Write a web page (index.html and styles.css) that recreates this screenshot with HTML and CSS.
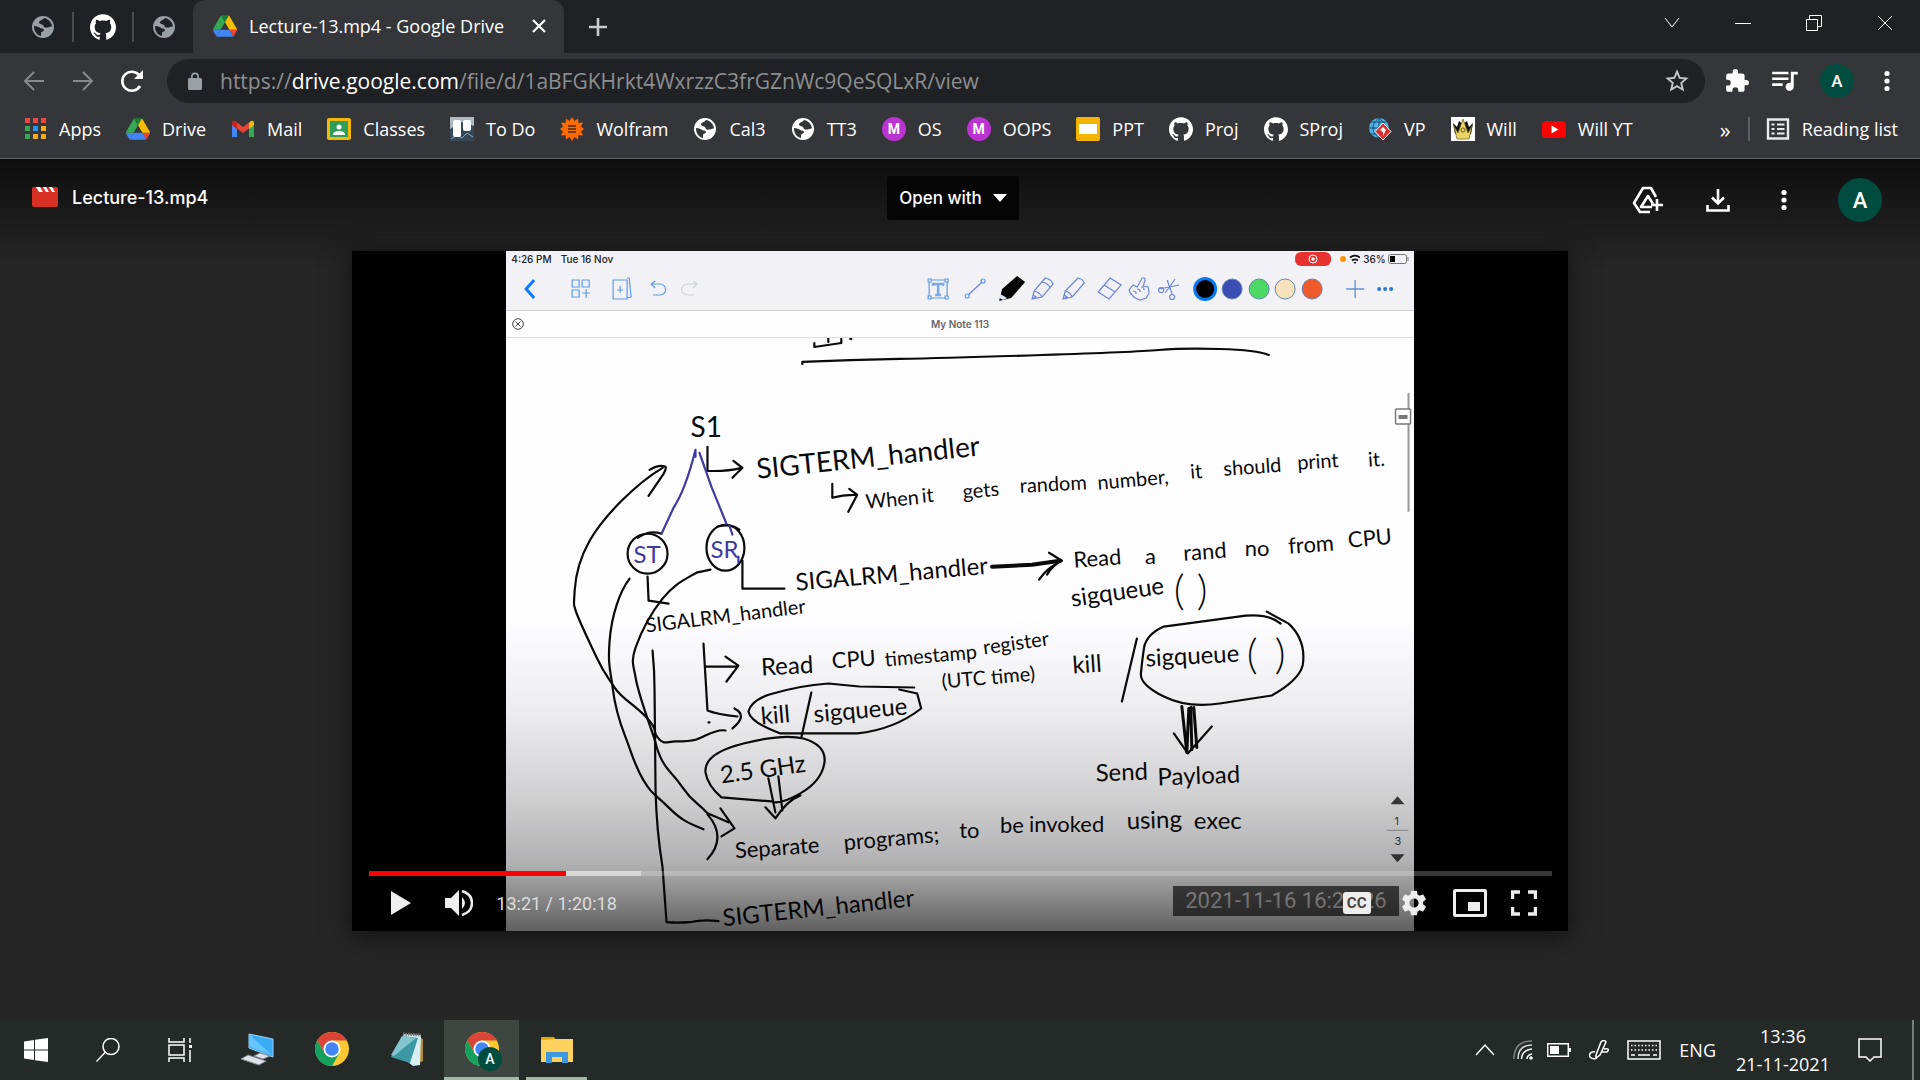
FILE: index.html
```html
<!DOCTYPE html>
<html lang="en">
<head>
<meta charset="utf-8">
<title>Lecture-13.mp4 - Google Drive</title>
<link rel="stylesheet" href="styles.css">
</head>
<body>
<svg class="defs" aria-hidden="true">
  <symbol id="globe" viewBox="0 0 24 24"><path fill-rule="evenodd" d="M12 1a11 11 0 1 0 0 22 11 11 0 0 0 0-22zM3 11c3 .3 5 1.200 7 2.500 2 0 3 .5 3 2-1 1.500-3 1-3 3v2.500C5.500 20 2.800 16 3 11zM13 3c-1 2-4 2-5 4-.5 2 3 2 4 3 .5 2 2 3 4 2.500 2 0 3-1.500 5-1C20.500 7 17 3.500 13 3z"/></symbol>
  <symbol id="github" viewBox="0 0 24 24"><path d="M12 .297c-6.63 0-12 5.373-12 12 0 5.303 3.438 9.8 8.205 11.385.6.113.82-.258.82-.577 0-.285-.01-1.04-.015-2.04-3.338.724-4.042-1.61-4.042-1.61C4.422 18.07 3.633 17.7 3.633 17.7c-1.087-.744.084-.729.084-.729 1.205.084 1.838 1.236 1.838 1.236 1.07 1.835 2.809 1.305 3.495.998.108-.776.417-1.305.76-1.605-2.665-.3-5.466-1.332-5.466-5.93 0-1.31.465-2.38 1.235-3.22-.135-.303-.54-1.523.105-3.176 0 0 1.005-.322 3.3 1.23.96-.267 1.98-.399 3-.405 1.02.006 2.04.138 3 .405 2.28-1.552 3.285-1.23 3.285-1.23.645 1.653.24 2.873.12 3.176.765.84 1.23 1.91 1.23 3.22 0 4.61-2.805 5.625-5.475 5.92.42.36.81 1.096.81 2.22 0 1.606-.015 2.896-.015 3.286 0 .315.21.69.825.57C20.565 22.092 24 17.592 24 12.297c0-6.627-5.373-12-12-12"/></symbol>
  <symbol id="drive" viewBox="0 0 87.3 78"><path fill="#4285f4" d="m6.600 66.850 3.850 6.650c.8 1.400 1.950 2.500 3.300 3.300l13.750-23.800h-27.500c0 1.550.4 3.100 1.200 4.500z"/><path fill="#34a853" d="m43.650 25-13.750-23.800c-1.350.8-2.500 1.900-3.300 3.300l-25.400 44a9.060 9.060 0 0 0-1.200 4.500h27.500z"/><path fill="#ea4335" d="m73.550 76.800c1.350-.8 2.500-1.900 3.300-3.300l1.600-2.750 7.650-13.250c.8-1.400 1.200-2.950 1.200-4.500h-27.502l5.852 11.500z"/><path fill="#188038" d="m43.650 25 13.750-23.800c-1.350-.8-2.900-1.200-4.500-1.200h-18.500c-1.600 0-3.150.45-4.500 1.200z"/><path fill="#4285f4" d="m59.800 53h-32.300l-13.750 23.800c1.350.8 2.900 1.200 4.500 1.200h50.800c1.600 0 3.150-.45 4.500-1.200z"/><path fill="#fbbc04" d="m73.400 26.500-12.700-22c-.8-1.400-1.950-2.500-3.300-3.300l-13.750 23.800 16.150 28h27.450c0-1.550-.4-3.100-1.200-4.500z"/></symbol>
  <symbol id="chrome" viewBox="0 0 48 48"><circle cx="24" cy="24" r="24" fill="#fbc92f"/><path fill="#db4437" d="M3.200 12A24 24 0 0 1 44.800 12H24L13.600 30z"/><path fill="#16a05d" d="M3.200 12A24 24 0 0 0 24 48L34.400 30 13.600 30z"/><circle cx="24" cy="24" r="12" fill="#fff"/><circle cx="24" cy="24" r="9.500" fill="#4285f4"/></symbol>
  <symbol id="kebab" viewBox="0 0 24 24"><circle cx="12" cy="4.500" r="2.600"/><circle cx="12" cy="12" r="2.600"/><circle cx="12" cy="19.500" r="2.600"/></symbol>
</svg>

<header class="browser">
  <div class="tabstrip">
    <button class="pin" aria-label="Pinned site"><svg class="i24 grey"><use href="#globe"/></svg></button>
    <button class="pin" aria-label="Pinned GitHub"><svg class="i26 white"><use href="#github"/></svg></button>
    <button class="pin last" aria-label="Pinned site"><svg class="i24 grey"><use href="#globe"/></svg></button>
    <div class="tab">
      <svg class="i24"><use href="#drive"/></svg>
      <span class="tab-title">Lecture-13.mp4 - Google Drive</span>
      <button aria-label="Close tab"><svg class="i14" viewBox="0 0 14 14"><path d="M1 1l12 12M13 1L1 13" stroke="#fff" stroke-width="2.200"/></svg></button>
    </div>
    <button class="newtab" aria-label="New tab"><svg class="i20" viewBox="0 0 20 20"><path d="M10 1v18M1 10h18" stroke="#c8cacd" stroke-width="2.600"/></svg></button>
    <div class="window-controls">
      <button aria-label="Search tabs"><svg class="i16" viewBox="0 0 16 16"><path d="M1 3l7 9 7-9" class="thin"/></svg></button>
      <button aria-label="Minimize"><svg class="i16" viewBox="0 0 16 16"><path d="M0 8.500h16" class="thin"/></svg></button>
      <button aria-label="Restore"><svg class="i16" viewBox="0 0 16 16"><path d="M.5 4.500h11v11H.5zM3.500 4V.5h12v11H12" class="thin"/></svg></button>
      <button aria-label="Close"><svg class="i16" viewBox="0 0 16 16"><path d="M1 1l14 14M15 1L1 15" class="thin"/></svg></button>
    </div>
  </div>

  <div class="toolbar">
    <button aria-label="Back"><svg class="i24" viewBox="0 0 24 24"><path d="M22 12H3M12 3l-9 9 9 9" class="dim"/></svg></button>
    <button aria-label="Forward"><svg class="i24" viewBox="0 0 24 24"><path d="M2 12h19M12 3l9 9-9 9" class="dim"/></svg></button>
    <button aria-label="Reload"><svg class="i24" viewBox="0 0 24 24"><path d="M20 17a9.500 9.500 0 1 1-.6-10.500" fill="none" stroke="#fff" stroke-width="2.600"/><path d="M23 1v9h-9z" fill="#fff"/></svg></button>
    <div class="omnibox">
      <svg class="lock" viewBox="0 0 14 18"><path fill="#9aa0a6" fill-rule="evenodd" d="M1.500 6H3V4.500a4 4 0 0 1 8 0V6h1.500q1.500 0 1.500 1.500v9q0 1.500-1.500 1.500h-11Q0 18 0 16.500v-9Q0 6 1.500 6zM4.700 6h4.600V4.500a2.300 2.300 0 0 0-4.600 0z"/></svg>
      <a class="url" href="#">https://<b>drive.google.com</b>/file/d/1aBFGKHrkt4WxrzzC3frGZnWc9QeSQLxR/view</a>
      <button aria-label="Bookmark this tab"><svg class="i28" viewBox="0 0 24 24"><path fill="#c4c7ca" d="M22 9.240l-7.190-.62L12 2 9.190 8.630 2 9.240l5.460 4.730L5.820 21 12 17.270 18.180 21l-1.630-7.030L22 9.240zM12 15.400l-3.760 2.270 1-4.280-3.320-2.880 4.380-.38L12 6.100l1.710 4.040 4.380.38-3.320 2.880 1 4.280L12 15.400z"/></svg></button>
    </div>
    <div class="ext">
      <button aria-label="Extensions"><svg class="i26 white" viewBox="0 0 24 24"><path d="M20.500 11H19V7c0-1.100-.9-2-2-2h-4V3.500a2.500 2.500 0 0 0-5 0V5H4c-1.100 0-2 .9-2 2v3.800h1.500a2.700 2.700 0 0 1 0 5.400H2V20c0 1.100.9 2 2 2h3.800v-1.500a2.700 2.700 0 0 1 5.400 0V22H17c1.100 0 2-.9 2-2v-4h1.500a2.500 2.500 0 0 0 0-5z"/></svg></button>
      <button aria-label="Media"><svg class="i28 white" viewBox="0 0 24 24"><path d="M1 4h14v2.200H1zM1 9h14v2.200H1zM1 14h9v2.200H1zM17 4h6v2.500h-3.500V17a3.500 3.500 0 1 1-2.500-3.400z"/></svg></button>
      <button class="avatar small" aria-label="Profile">A</button>
      <button aria-label="Menu"><svg class="i24 white"><use href="#kebab"/></svg></button>
    </div>
  </div>

  <nav class="bookmarks">
    <a href="#"><svg class="i24" viewBox="0 0 24 24"><path fill="#f0443a" d="M2 1h5v5H2zM10 1h5v5h-5zM18 1h5v5h-5z"/><path fill="#34a853" d="M2 9h5v5H2zM2 17h5v5H2z"/><path fill="#2196f3" d="M10 9h5v5h-5z"/><path fill="#fba90a" d="M18 9h5v5h-5zM10 17h5v5h-5zM18 17h5v5h-5z"/></svg>Apps</a>
    <a href="#"><svg class="i24"><use href="#drive"/></svg>Drive</a>
    <a href="#"><svg class="i24" viewBox="0 0 24 24"><path fill="#4285f4" d="M1 6v14h5V10z"/><path fill="#34a853" d="M23 6v14h-5V10z"/><path fill="#ea4335" d="M4 4l8 6 8-6 1 5-9 7-9-7z"/><path fill="#c5221f" d="M1 6q0-3 3-2l2 2v6L1 8z"/><path fill="#fbbc04" d="M23 6q0-3-3-2l-2 2v6l5-4z"/></svg>Mail</a>
    <a href="#"><svg class="i24" viewBox="0 0 24 24"><rect y="1" width="24" height="22" rx="2" fill="#f4b70c"/><rect x="3" y="4" width="18" height="16" fill="#2f9e58"/><circle cx="12" cy="10" r="2.500" fill="#fff"/><path d="M6 18q0-4 6-4t6 4z" fill="#fff"/></svg>Classes</a>
    <a href="#"><svg class="i24" viewBox="0 0 24 24"><path d="M0 0h24v24H0z" fill="#35485a"/><path d="M0 0h24v9L12 5 0 12z" fill="#aeb8bf"/><path d="M1 22l6-4 5 3 5-5 6 4" stroke="#8aa2b4" fill="none"/><rect x="3" y="3" width="8" height="17" rx="2" fill="#fff"/><rect x="13" y="3" width="8" height="11" rx="2" fill="#fff"/></svg>To Do</a>
    <a href="#"><svg class="i24" viewBox="0 0 24 24"><path fill="#ff6a00" d="M12 0l2.500 4L18 1.500l.5 4.500 4.500-.5-2 4 3 2.500-3 2.500 2 4-4.500-.5-.5 4.500-3.500-2.500L12 24l-2.500-4L6 22.500 5.500 18 1 18.500l2-4L0 12l3-2.500-2-4L5.500 6 6 1.500 9.500 4z"/><path d="M8 9h8M8 12h8M8 15h8" stroke="#4c2b15" stroke-width="1.500"/></svg>Wolfram</a>
    <a href="#"><svg class="i24 white"><use href="#globe"/></svg>Cal3</a>
    <a href="#"><svg class="i24 white"><use href="#globe"/></svg>TT3</a>
    <a href="#"><span class="m">M</span>OS</a>
    <a href="#"><span class="m">M</span>OOPS</a>
    <a href="#"><svg class="i24" viewBox="0 0 24 24"><rect width="24" height="24" rx="2" fill="#f5b400"/><path fill="#fff" d="M3 7h18v10H3z"/></svg>PPT</a>
    <a href="#"><svg class="i24 white"><use href="#github"/></svg>Proj</a>
    <a href="#"><svg class="i24 white"><use href="#github"/></svg>SProj</a>
    <a href="#"><svg class="i24" viewBox="0 0 24 24"><circle cx="11" cy="11" r="10" fill="#4fb3e8"/><path d="M11 1v20M1 11h20M3 5h16M3 17h16M11 1C3 7 3 15 11 21M11 1c8 6 8 14 0 20" stroke="#174b70" fill="none"/><path d="M15 6l8 8.500-8 8.500-8-8.500z" fill="#d9302c" stroke="#fff"/><path d="M15 10l3 3-3 6v-4l-3-2z" fill="#fff"/></svg>VP</a>
    <a href="#"><svg class="i24" viewBox="0 0 24 24"><path d="M0 0h24v24H0z" fill="#fff"/><path d="M2 6l4 4 2-6 4 3 4-3 2 6 4-4-2 11H4z" fill="#111"/><path d="M3 9l4 7 5-14 5 14 4-7-3 13H6z" fill="#ecd467" stroke="#6a5a18" stroke-width=".7"/><circle cx="12" cy="13" r="2" fill="none" stroke="#6a5a18"/></svg>Will</a>
    <a href="#"><svg class="i24" viewBox="0 0 24 24"><rect y="4" width="24" height="17" rx="4" fill="#f00"/><path d="M9.500 8.500l7 4-7 4z" fill="#fff"/></svg>Will YT</a>
    <button class="more" aria-label="More bookmarks">»</button>
    <a class="reading" href="#"><svg class="i24" viewBox="0 0 24 24"><path fill="none" stroke="#e8eaed" stroke-width="2.400" d="M2 2.500h20v19H2z"/><path d="M5.500 7.500h3M11 7.500h7.500M5.500 12h3M11 12h7.500M5.500 16.500h3M11 16.500h7.500" stroke="#e8eaed" stroke-width="2.200"/></svg>Reading list</a>
  </nav>
</header>

<main class="viewer">
  <div class="viewer-bar">
    <h1><svg class="i26" viewBox="0 0 26 22"><rect y="1" width="26" height="20" rx="2" fill="#d93025"/><path fill="#fff" d="M4 1h4l3 5H7zM11 1h3l3 5h-3zM17 1h3l3 5h-3z"/></svg>Lecture-13.mp4</h1>
    <button class="open-with">Open with <svg class="caret" viewBox="0 0 14 8"><path d="M0 0h14L7 8z" fill="#fff"/></svg></button>
    <div class="actions">
      <button aria-label="Add shortcut to Drive"><svg class="i32" viewBox="0 0 32 32"><path d="M18 28H8L2 19 11 4h8l5 9M20 23H9l7-11 5 8" fill="none" stroke="#fff" stroke-width="2.600" stroke-linejoin="round"/><path d="M25 15v12M19 21h12" stroke="#fff" stroke-width="2.600"/></svg></button>
      <button aria-label="Download"><svg class="i24" viewBox="0 0 24 24"><path d="M12 1v14M6 9.500l6 6 6-6M1.500 17v5.500h21V17" fill="none" stroke="#fff" stroke-width="2.600"/></svg></button>
      <button aria-label="More actions"><svg class="i24 white"><use href="#kebab"/></svg></button>
      <button class="avatar" aria-label="Account">A</button>
    </div>
  </div>

  <section class="player">
    <div class="note">
      <div class="status">
        <span>4:26 PM</span><span>Tue 16 Nov</span>
        <svg class="rec" viewBox="0 0 36 14"><rect width="36" height="14" rx="6" fill="#e8322f"/><circle cx="18" cy="7" r="4" fill="none" stroke="#fff"/><circle cx="18" cy="7" r="1.800" fill="#fff"/></svg>
        <svg class="signal" viewBox="0 0 20 12"><circle cx="3" cy="6" r="3" fill="#ff9500"/><path d="M10 4.500a8 8 0 0 1 10 0M12 7.500a5 5 0 0 1 6 0" fill="none" stroke="#111" stroke-width="1.800"/><path d="M13.500 9h3L15 11z"/></svg>
        <span>36%</span>
        <svg class="batt" viewBox="0 0 21 10"><rect x=".5" y=".5" width="18" height="9" rx="2" fill="none" stroke="#777"/><path d="M2 2h5v6H2z"/><path d="M20 3v4" stroke="#777"/></svg>
      </div>
      <svg class="tools" viewBox="507 267 907 43">
        <path d="M535 280l-8 9 8 9" stroke="#0a7aff" stroke-width="3" fill="none"/>
        <g fill="none" stroke="#5b9be8" stroke-width="1.200">
          <path d="M573 280h7v7h-7zM583 280h7v7h-7zM573 290h7v7h-7zM583 293h8M587 289v9M614 280h14v19h-14zM628 278h2l2 19-4 1M618 290h6M621 286v7"/>
          <path d="M656 281l-4 3 4 4M652 284h9a5 5 0 0 1 0 11h-7"/>
          <path stroke="#cfd3da" d="M694 281l4 3-4 4M697 284h-9a5 5 0 0 0 0 11h7"/>
          <path d="M930 280h18v18h-18z"/><path stroke-width="2.500" stroke="#79a9e6" d="M934 286v-2h10v2M939 284v11M936 295h6"/>
          <path fill="#fff" d="M929 279h3v3h-3zM946 279h3v3h-3zM929 296h3v3h-3zM946 296h3v3h-3z"/>
          <path stroke="#6b83d8" d="M969 295l14-13"/><circle cx="968" cy="296" r="2"/><circle cx="984" cy="281" r="2"/>
          <g stroke="#6c86d8"><path d="M1033 299l2-8 11-13q6 1 8 6l-11 13zM1035 291q5 1 8 6M1043 282q6 1 8 6M1033 299l4-2-3-2"/><path d="M1064 299l2-8 13-13q5 1 6 5l-12 14zM1066 291q5 1 7 6M1064 299l4-2-3-2"/><path d="M1099 292l12-14 11 7-12 14zM1105 285l11 7"/><path d="M1136 298q-5-4-6-8l4-5 4 2 5-9q3-1 3 2l-2 6 5 1 1 6-3 5-6 2zM1134 291q3 0 3 3M1138 289q3 0 3 3M1142 287q3 0 3 3"/><path d="M1176 279l-10 14M1180 285l-20 4M1168 280l5 14"/><circle cx="1162" cy="290" r="2.500"/><circle cx="1173" cy="297" r="2.500"/></g>
        </g>
        <path d="M1000 301l3-12 15-13 8 6-14 16z" fill="#050505"/><path d="M1001 294l7 4-4 2-4-2z" fill="#dfe8f7"/>
        <circle cx="1206" cy="289" r="12" fill="#0b78f0"/><circle cx="1206" cy="289" r="9"/>
        <g stroke="#6688b0"><circle cx="1233" cy="289" r="10" fill="#3b4cb4"/><circle cx="1260" cy="289" r="10" fill="#4cd964"/><circle cx="1286" cy="289" r="10" fill="#f8e2bd"/><circle cx="1313" cy="289" r="10" fill="#f05a2a"/></g>
        <path d="M1347 289h18M1356 280v18" stroke="#5f90d6" stroke-width="1.300"/>
        <g fill="#2b78dc"><circle cx="1380" cy="289" r="2"/><circle cx="1386" cy="289" r="2"/><circle cx="1392" cy="289" r="2"/></g>
      </svg>
      <div class="note-title">
        <svg class="i12" viewBox="0 0 12 12"><circle cx="6" cy="6" r="5.300" fill="none" stroke="#444"/><path d="M3.500 3.500l5 5M8.500 3.500l-5 5" stroke="#444"/></svg>
        <span>My Note 113</span>
      </div>
      <svg class="canvas" viewBox="507 337 907 594">
        <g class="ink">
          <path d="M815 342v4l27-4v-4M829 337v4M851 338h1M803 363v-2Q850 359 900 358T1043 354 1160 349 1221 348 1270 354"/>
          <path d="M708 446v24q18 1 34-3M734 460l9 7-10 10M833 483v14q10-3 23-3M850 488l8 6-9 17"/>
          <path d="M743 560v28h42M648 576l1 24 20 3"/>
          <path stroke-width="4" d="M993 566l40-2 28-4"/><path d="M1050 552l13 8q-14 6-23 19M1063 560q-9 4-15 14"/>
          <ellipse cx="648" cy="553" rx="20" ry="20"/><ellipse cx="726" cy="547" rx="19" ry="23"/><path d="M638 537q12-8 24-4M718 526q12-4 22 3"/>
          <path d="M663 467C648 476 635 487 622 500S598 526 590 540 576 573 575 590 574 603 576 610 589 640 597 657 607 675 615 687 634 703 647 717 652 729 658 737 667 741 676 741 690 741 697 739 716 728 726 730M650 469q10-6 16-3 1 2-2 7l-15 22"/>
          <path d="M630 578C620 591 612 615 610 640S611 670 613 687 619 719 626 737 635 765 644 780 655 793 669 807 690 823 704 829"/>
          <path d="M711 569l-14 3C685 579 675 583 663 598S641 633 636 647 634 665 636 677 645 710 652 730 655 743 661 757 673 772 683 787 697 801 708 813L729 822M721 808l14 20-13 8M708 814Q728 837 708 859"/>
          <path d="M653 650q2 20 2 40l1 100q1 40 7 77l4 55q10 1 23 0 14-3 29-1"/>
          <path d="M704 643l4 67q10 4 30 6M735 708q14 7-2 20M706 666h31M726 656l13 9-12 16M709 722h1"/>
          <path d="M812 692l-10 45M915 687L860 686 829 683Q800 685 770 694 752 700 749 711 751 722 781 733L858 733Q895 729 922 708L918 693 900 689"/>
          <path d="M706 772Q704 753 744 743T804 738Q828 745 825 763T801 793 772 801L722 797Q708 785 706 772zM769 778l7 34M779 776l4 34M766 807l10 11Q788 800 801 795"/>
          <path d="M1138 638l-15 63M1282 623Q1270 613 1247 615L1165 626Q1147 634 1145 648T1142 673 1165 696 1221 703 1273 695Q1300 680 1304 665 1308 640 1290 623L1268 611"/>
          <path stroke-width="3" d="M1183 706l5 46 2-44M1195 707l3 40M1192 707l1 42"/><path d="M1175 733l14 20 24-27"/>
        </g>
        <g class="ink blue"><path d="M696 449q-10 40-22 58l-12 26M700 452l12 34 15 37M696 449v7M730 525l3 9M739 556v6"/></g>
        <g class="hand">
          <text class="xl" x="691" y="436">S1</text>
          <text class="xl" transform="translate(758 478) rotate(-6)">SIGTERM_handler</text>
          <g class="s">
            <text transform="translate(867 508) rotate(-5)">When</text><text transform="translate(923 502) rotate(-5)">it</text><text transform="translate(964 498) rotate(-5)">gets</text><text transform="translate(1021 492) rotate(-3)">random</text><text transform="translate(1099 489) rotate(-5)">number,</text><text transform="translate(1192 478) rotate(-5)">it</text><text transform="translate(1225 475) rotate(-4)">should</text><text transform="translate(1299 469) rotate(-4)">print</text><text transform="translate(1370 466) rotate(-4)">it.</text>
            <text transform="translate(886 666) rotate(-5)">timestamp</text><text transform="translate(985 654) rotate(-8)">register</text><text transform="translate(943 688) rotate(-5)">(UTC time)</text>
            <text transform="translate(647 632) rotate(-7)">SIGALRM_handler</text>
          </g>
          <g class="m22">
            <text transform="translate(1075 567) rotate(-4)">Read</text><text transform="translate(1146 563)">a</text><text transform="translate(1185 560) rotate(-4)">rand</text><text transform="translate(1246 555)">no</text><text transform="translate(1290 553) rotate(-4)">from</text><text transform="translate(1350 547) rotate(-5)">CPU</text>
            <text transform="translate(833 668) rotate(-4)">CPU</text><text transform="translate(736 858) rotate(-4)">Separate</text><text transform="translate(845 850) rotate(-5)">programs;</text><text transform="translate(960 838)">to</text><text transform="translate(1001 833)">be</text><text transform="translate(1030 832)">invoked</text>
          </g>
          <g class="l">
            <text transform="translate(1073 606) rotate(-8)">sigqueue</text><text transform="translate(762 724) rotate(-5)">kill</text><text transform="translate(1074 673) rotate(-4)">kill</text><text transform="translate(1147 666) rotate(-3)">sigqueue</text><text transform="translate(815 722) rotate(-5)">sigqueue</text>
            <text transform="translate(1097 781) rotate(-2)">Send</text><text transform="translate(1159 785) rotate(-2)">Payload</text><text transform="translate(1128 829) rotate(-2)">using</text><text transform="translate(1195 829)">exec</text>
            <text transform="translate(797 590) rotate(-5)">SIGALRM_handler</text><text transform="translate(762 675) rotate(-3)">Read</text><text transform="translate(722 783) rotate(-8)">2.5 GHz</text><text transform="translate(724 926) rotate(-6)">SIGTERM_handler</text>
          </g>
          <g class="paren"><text x="1175" y="604">(</text><text x="1198" y="604">)</text><text x="1248" y="668">(</text><text x="1276" y="668">)</text></g>
          <g class="l blue"><text x="634" y="562">ST</text><text x="711" y="557">SR</text></g>
        </g>
        <path d="M1410 392v119" stroke="#999" stroke-width="2"/><rect x="1397" y="408" width="15" height="15" rx="1" fill="#fff" stroke="#777" stroke-width="1.500"/><path d="M1400 415h9M1400 417h9" stroke="#777" stroke-width="2"/>
        <path d="M1392 804l7-8 7 8zM1392 854l7 8 7-8z" fill="#444"/><path d="M1388 830h22" stroke="#aaa"/>
        <text class="page" x="1396" y="825">1</text><text class="page" x="1396" y="845">3</text>
      </svg>
      <span class="stamp">2021-11-16 16:26:26</span>
    </div>
    <div class="shade"></div>
    <div class="controls">
      <div class="progress"><div class="loaded" style="width:23%"></div><div class="played" style="width:16.6%"></div></div>
      <div class="buttons">
        <button aria-label="Play"><svg class="i24" viewBox="0 0 24 24"><path d="M2 0l20 12L2 24z" fill="#eee"/></svg></button>
        <button aria-label="Mute"><svg class="i28" viewBox="0 0 28 28"><path d="M0 9h6l8-8v26l-8-8H0z" fill="#eee"/><path d="M17 8q6 6 0 12z" fill="#eee"/><path d="M17 2q10 3 10 12t-10 12" fill="none" stroke="#eee" stroke-width="2.500"/></svg></button>
        <span class="time">13:21 / 1:20:18</span>
        <button class="cc" aria-label="Subtitles">CC</button>
        <button aria-label="Settings"><svg class="i28" viewBox="1 1 22 22"><path fill="#eee" d="M19.140 12.940c.04-.3.06-.61.06-.94 0-.32-.02-.64-.07-.94l2.030-1.580c.18-.14.23-.41.12-.61l-1.920-3.320c-.12-.22-.37-.29-.59-.22l-2.390.96c-.5-.38-1.030-.7-1.620-.94l-.36-2.540c-.04-.24-.24-.41-.48-.41h-3.840c-.24 0-.43.17-.47.41l-.36 2.540c-.59.24-1.130.57-1.620.94l-2.390-.96c-.22-.08-.47 0-.59.22L2.740 8.870c-.12.21-.08.47.12.61l2.030 1.580c-.05.3-.09.63-.09.94s.02.64.07.94l-2.030 1.580c-.18.14-.23.41-.12.61l1.920 3.320c.12.22.37.29.59.22l2.390-.96c.5.38 1.030.7 1.620.94l.36 2.540c.05.24.24.41.48.41h3.840c.24 0 .44-.17.47-.41l.36-2.540c.59-.24 1.130-.56 1.620-.94l2.390.96c.22.08.47 0 .59-.22l1.920-3.320c.12-.22.07-.47-.12-.61l-2.010-1.580zM12 15.600a3.600 3.600 0 1 1 0-7.200 3.600 3.600 0 0 1 0 7.200z"/></svg></button>
        <button aria-label="Miniplayer"><svg class="pip" viewBox="0 0 34 28"><rect x="1.500" y="1.500" width="31" height="25" rx="1" fill="none" stroke="#eee" stroke-width="3"/><path d="M15 13h12v9H15z" fill="#eee"/></svg></button>
        <button aria-label="Full screen"><svg class="i26" viewBox="0 0 26 26"><path d="M1.500 9V2H9M17 2h7.500v7M24.500 17v7H17M9 24H1.500v-7" fill="none" stroke="#eee" stroke-width="3.500"/></svg></button>
      </div>
    </div>
  </section>
</main>

<footer class="taskbar">
  <button class="sys" aria-label="Start"><svg class="i24" viewBox="0 0 24 24"><path fill="#fff" d="M0 3.500L10 2v9.500H0zM11 1.800L24 0v11.500H11zM0 12.500h10V22L0 20.500zM11 12.500h13V24l-13-1.800z"/></svg></button>
  <button class="sys" aria-label="Search"><svg class="i24" viewBox="0 0 24 24"><circle cx="15" cy="8.500" r="8" class="line"/><path d="M9.500 14L.5 23.500" class="line"/></svg></button>
  <button class="sys" aria-label="Task view"><svg class="i24" viewBox="0 0 24 24"><path d="M1 0v4h15V0M1 7h15v10H1zM1 24v-4h15v4M22 0v5M22 12v12" class="line"/><path d="M21 7h3v3h-3z" fill="#fff"/></svg></button>
  <div class="apps">
    <button aria-label="This PC"><svg class="i34" viewBox="0 0 34 34"><path d="M9 2l24 5v18L9 16z" fill="#3aabf5" stroke="#9bd2f6"/><path d="M10 3l22 20-22-8z" fill="#63c4ff"/><path d="M14 24l6-3 10 3-7 3zM1 27l7-4 18 6-7 4z" fill="#dce4ea" stroke="#889"/></svg></button>
    <button aria-label="Chrome"><svg class="i34"><use href="#chrome"/></svg></button>
    <button aria-label="Notepad"><svg class="i34" viewBox="0 0 34 34"><path d="M29 5l4 2v22l-4 2z" fill="#b58b37"/><path d="M13 2l18 1-1 30-7 1-5-4z" fill="#d8eff2"/><path d="M13 4l15 2-8 25-19-6z" fill="#3d97a5"/><path d="M12 4l14 2-22 18-3-1z" fill="#82c5cf"/><path d="M13 2l18 1" stroke="#777" stroke-width="3" stroke-dasharray="1.500 1"/></svg></button>
    <button class="active" aria-label="Chrome window"><svg class="i34"><use href="#chrome"/></svg><span class="badge">A</span></button>
    <button class="running" aria-label="File Explorer"><svg class="i34" viewBox="0 0 34 34"><path d="M1 5h13l2 3H1z" fill="#e5a300"/><path d="M1 8l15-1h17v23H1z" fill="#ffd25e"/><path d="M6 31V20h22v11h-6v-6H12v6z" fill="#3c97dd"/></svg></button>
  </div>
  <div class="tray">
    <svg class="i20" viewBox="0 0 20 20"><path d="M1 15l9-10 9 10" class="line"/></svg>
    <svg class="i20 wifi" viewBox="0 0 20 20"><path d="M14 19q0-4 5-5M8.500 19Q9 10 19 9" class="line"/><path d="M5 19Q5 5 19 5" class="line" opacity=".8"/><path d="M1 19Q1 1 19 1" class="line" opacity=".4"/><circle cx="18" cy="18" r="1.800" fill="#fff"/></svg>
    <svg class="battery" viewBox="0 0 24 14"><path d="M.7.700h20.600v12.600H.7z" class="line"/><path d="M3 3h9v8H3z" fill="#fff"/><path d="M22 5h2v4h-2z" fill="#fff"/></svg>
    <svg class="i20" viewBox="0 0 20 20"><path d="M8 18q-4 2-7-1c-2-4 3-6 5-5M7 15L12 2q3-3 5 0l-6 13-4 3zM15 9q7-1 3 3h-5" class="line"/></svg>
    <svg class="keyboard" viewBox="0 0 34 20"><path d="M1 1h32v18H1z" class="line"/><path d="M4 5.500h26M4 10h26" stroke="#fff" stroke-width="1.500" stroke-dasharray="1.500 2"/><path d="M4 15h4M11 15h12M26 15h4" stroke="#fff" stroke-width="1.500"/></svg>
    <span>ENG</span>
    <span class="clock">13:36<br>21-11-2021</span>
    <svg class="i24" viewBox="0 0 24 24"><path d="M1 1h22v18h-7l-4 4-4-4H1z" class="line"/></svg>
    <i class="peek"></i>
  </div>
</footer>
</body>
</html>
```
FILE: styles.css
```css
* { box-sizing: border-box; }
body { margin: 0; min-height: 100vh; display: flex; flex-direction: column; background: #252525; color: #fff; font-family: "Open Sans", "Noto Sans", sans-serif; font-size: 18px; }
button { border: 0; padding: 0; background: none; color: inherit; font: inherit; display: flex; align-items: center; justify-content: center; }
a { color: inherit; text-decoration: none; }
svg { display: block; flex: none; }
.defs { position: absolute; width: 0; height: 0; }
.i12 { width: 12px; height: 12px; }
.i14 { width: 14px; height: 14px; }
.i16 { width: 16px; height: 16px; }
.i20 { width: 20px; height: 20px; }
.i24 { width: 24px; height: 24px; }
.i26 { width: 26px; height: 26px; }
.i28 { width: 28px; height: 28px; }
.i32 { width: 32px; height: 32px; }
.i34 { width: 34px; height: 34px; }
.white { fill: #fff; }
.grey { fill: #9aa0a6; }
.thin { fill: none; stroke: #fff; stroke-width: 1; }
.dim { fill: none; stroke: #87898c; stroke-width: 2; }
.line { fill: none; stroke: #fff; stroke-width: 1.5; }

/* Browser frame */
.browser { background: #35363a; border-bottom: 1px solid #5f6165; }
.tabstrip { display: flex; align-items: center; height: 53px; background: #202124; padding-left: 14px; }
.pin { width: 60px; height: 30px; border-right: 2px solid #4a4c50; }
.pin.last { width: 59px; border: 0; }
.tab { display: flex; align-items: center; width: 371px; height: 53px; padding: 0 18px 2px 20px; background: #35363a; border-radius: 12px 12px 0 0; }
.tab-title { flex: 1; margin-left: 12px; white-space: nowrap; }
.newtab { margin-left: 24px; }
.window-controls { display: flex; margin-left: auto; padding: 0 0 8px; }
.window-controls button { width: 71px; }
.toolbar { display: flex; align-items: center; height: 55px; padding: 0 21px 0 22px; gap: 25px; }
.omnibox { flex: 1; display: flex; align-items: center; height: 44px; margin-left: -2px; padding: 0 14px 0 21px; border-radius: 22px; background: #202124; }
.lock { width: 14px; height: 18px; }
.url { flex: 1; margin-left: 18px; color: #8d8f92; font-size: 21px; white-space: nowrap; }
.url b { color: #fff; font-weight: 400; }
.ext { display: flex; align-items: center; gap: 21px; margin-left: -6px; }
.avatar { width: 44px; height: 44px; border-radius: 50%; background: #004d40; font: 500 22px Roboto, sans-serif; }
.avatar.small { width: 34px; height: 34px; font-size: 17px; }
.bookmarks { display: flex; align-items: center; height: 50px; padding: 0 22px 8px 23px; gap: 25px; white-space: nowrap; }
.bookmarks a { display: flex; align-items: center; gap: 12px; }
.m { width: 24px; height: 24px; border-radius: 50%; background: #bb33d1; font: 700 14px/24px Roboto, sans-serif; text-align: center; }
.more { margin-left: auto; font-size: 22px; }
.bookmarks .reading { padding-left: 16px; margin-left: -8px; border-left: 2px solid #5f6165; }

/* Drive viewer */
.viewer { flex: 1; background: linear-gradient(#0e0e0e, #262626 110px); }
.viewer-bar { display: grid; grid-template-columns: 1fr auto 1fr; align-items: center; height: 92px; padding: 0 38px 10px 24px; font-family: Inter, sans-serif; }
.viewer-bar h1 { display: flex; align-items: center; gap: 14px; margin: 0 0 6px 8px; font-size: 18px; font-weight: 500; }
.open-with { width: 132px; height: 44px; margin-bottom: 4px; gap: 11px; background: #050505; border-radius: 3px; font-size: 17px; font-weight: 500; }
.caret { width: 14px; height: 8px; }
.actions { display: flex; justify-content: flex-end; align-items: center; gap: 42px; }

/* Video player */
.player { position: relative; width: 63.3%; aspect-ratio: 1215 / 680; margin: 0 auto; background: #000; box-shadow: 0 4px 24px #111; overflow: hidden; }
.note { position: relative; width: 74.65%; height: 100%; margin: 0 auto; background: #fefdff; color: #222; font-family: Inter, sans-serif; display: flex; flex-direction: column; }
.status { display: flex; align-items: center; gap: 9px; height: 16px; padding: 0 5px; background: #f2f1f5; font-size: 10px; font-weight: 500; }
.rec { width: 36px; height: 14px; margin-left: auto; }
.signal { width: 20px; height: 12px; margin-right: -6px; }
.batt { width: 21px; height: 10px; margin-left: -7px; }
.tools { width: 100%; background: #f2f1f5; border-bottom: 1px solid #cfced2; }
.note-title { display: grid; grid-template-columns: 1fr auto 1fr; align-items: center; height: 27px; padding: 0 6px; border-bottom: 1px solid #dddce0; color: #666; font-size: 10px; font-weight: 600; }
.canvas { width: 100%; flex: 1; }
.ink { fill: none; stroke: #0a0a0a; stroke-width: 2.2; stroke-linecap: round; stroke-linejoin: round; }
.ink.blue { stroke: #3f3aa0; }
.hand { fill: #0a0a0a; font-family: Lato, sans-serif; }
.s { font-size: 20px; }
.m22 { font-size: 22px; }
.l { font-size: 24px; }
.xl { font-size: 28px; }
.paren { font-size: 42px; font-weight: 300; }
.hand .blue { fill: #3f3aa0; }
.page { fill: #444; font-size: 11px; }
.stamp { position: absolute; right: 15px; bottom: 15px; padding: 0 12px; background: #5c5c5c; color: #ddd; font: 22px/30px Roboto, sans-serif; }
.shade { position: absolute; inset: 0; background: linear-gradient(transparent 54%, rgba(0,0,0,.07) 68%, rgba(0,0,0,.18) 80%, rgba(0,0,0,.3) 90%, rgba(0,0,0,.62)); }
.controls { position: absolute; left: 17px; right: 16px; bottom: 0; height: 60px; }
.progress { position: relative; height: 5px; background: rgba(255,255,255,.22); }
.progress div { position: absolute; left: 0; top: 0; height: 100%; }
.loaded { background: rgba(255,255,255,.45); }
.played { background: #f00; }
.buttons { display: flex; align-items: center; height: 54px; padding: 0 15px 0 20px; gap: 29px; }
.buttons .i24 { margin-right: 3px; }
.time { flex: 1; margin-left: -6px; color: #ddd; font: 18px Roboto, sans-serif; }
.cc { width: 28px; height: 22px; border-radius: 3px; background: #eee; color: #444; font: 700 15px Roboto, sans-serif; }
.pip { width: 34px; height: 28px; margin: 0 -5px 0 -4px; }

/* Taskbar */
.taskbar { display: flex; height: 60px; background: #242a27; }
.sys { width: 72px; }
.apps { display: flex; margin-left: 3px; }
.apps button { position: relative; width: 75px; border-bottom: 3px solid transparent; }
.apps .active { background: #3d4640; border-color: #9fb8a8; }
.apps .running { width: 61px; margin-left: 7px; border-color: #9fb8a8; }
.badge { position: absolute; left: 34px; top: 27px; width: 24px; height: 24px; border-radius: 50%; background: #004d40; font: 500 14px/24px Roboto, sans-serif; text-align: center; }
.tray { display: flex; align-items: center; gap: 18px; margin-left: auto; }
.battery { width: 24px; height: 14px; margin-left: -4px; }
.keyboard { width: 34px; height: 20px; }
.clock { width: 98px; text-align: center; line-height: 28px; }
.tray .i24 { margin-left: 8px; }
.peek { width: 2px; height: 60px; margin: 0 6px 0 12px; background: #777c79; }
```
